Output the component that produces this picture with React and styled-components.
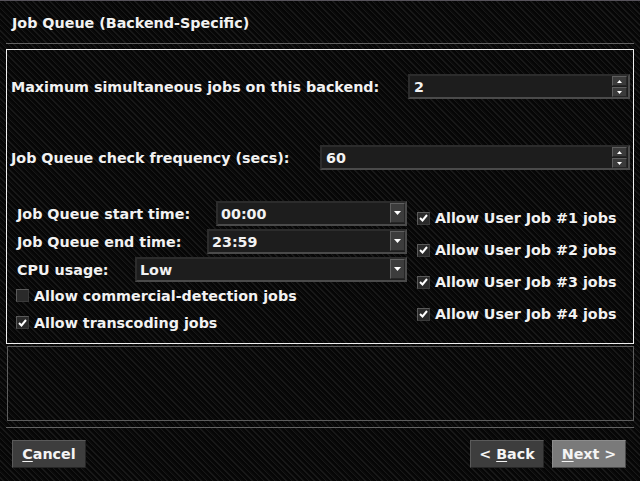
import React from "react";
import styled, { createGlobalStyle } from "styled-components";

const Global = createGlobalStyle`
  html, body { margin: 0; padding: 0; background: #000; }
  * { box-sizing: border-box; }
`;

const carbon = `
  background-color: #0b0b0b;
  background-image: repeating-linear-gradient(45deg, #060606 0px, #060606 2px, #181818 2px, #181818 3px, #0b0b0b 3px, #0b0b0b 4px);
`;

const Screen = styled.div`
  width: 640px;
  height: 481px;
  overflow: hidden;
  display: flex;
  flex-direction: column;
  ${carbon}
  font-family: "DejaVu Sans", "Liberation Sans", sans-serif;
  font-weight: bold;
  font-size: 14.3px;
  color: #f2f2f2;
`;

const TopLine = styled.div`
  height: 1px;
  background: #56525a;
`;

const Header = styled.div`
  height: 42px;
  display: flex;
  align-items: center;
  padding: 2px 0 0 12px;
`;

const Rule = styled.div`
  height: 1px;
  margin: ${(p) => p.$top || 0}px 6px 0 6px;
  background: #626262;
`;

const GroupBox = styled.div`
  margin: 5px 6px 0 6px;
  height: 295px;
  border: 1px solid #f0f0f0;
  display: flex;
  flex-direction: column;
  padding: 0 3px 0 4px;
`;

const FieldRow = styled.div`
  display: flex;
  align-items: center;
  justify-content: space-between;
  height: 25px;
  margin-top: ${(p) => p.$top}px;
`;

const Label = styled.span`
  white-space: nowrap;
  flex: none;
  width: ${(p) => (p.$w ? `${p.$w}px` : "auto")};
`;

const SpinBox = styled.div`
  width: ${(p) => p.$w}px;
  height: 25px;
  display: flex;
  align-items: center;
  background: #1d1d1d;
  border-style: solid;
  border-width: 2px;
  border-color: #2c2c2c #4a4a4a #4a4a4a #2c2c2c;
  padding-left: 4px;
  padding-right: 1px;
`;

const FieldText = styled.span`
  flex: 1;
  white-space: nowrap;
`;

const SpinButtons = styled.div`
  display: flex;
  flex-direction: column;
  gap: 1px;
`;

const SmallButton = styled.div`
  width: 15px;
  height: 10px;
  background: #3b3b3b;
  border: 1px solid;
  border-color: #5e5e5e #262626 #262626 #5e5e5e;
  display: flex;
  align-items: center;
  justify-content: center;
`;

const Columns = styled.div`
  display: flex;
  margin-top: 31px;
  padding-left: 5px;
  gap: 10px;
`;

const LeftCol = styled.div`
  width: 391px;
  display: flex;
  flex-direction: column;
`;

const ComboStack = styled.div`
  display: flex;
  flex-direction: column;
  gap: 3px;
`;

const RightCol = styled.div`
  display: flex;
  flex-direction: column;
  padding-top: 1px;
`;

const ComboRow = styled.div`
  display: flex;
  align-items: center;
  height: 25px;
  padding-left: 1px;
`;

const Combo = styled.div`
  flex: 1;
  height: 25px;
  display: flex;
  align-items: center;
  background: #1d1d1d;
  border-style: solid;
  border-width: 2px;
  border-color: #2c2c2c #4a4a4a #4a4a4a #2c2c2c;
  padding-left: 3px;
`;

const DropButton = styled.div`
  width: 15px;
  height: 20px;
  background: #3c3c3c;
  border: 1px solid;
  border-color: #606060 #262626 #262626 #606060;
  display: flex;
  align-items: center;
  justify-content: center;
  margin-top: -2px;
`;

const CheckRow = styled.div`
  display: flex;
  align-items: center;
  gap: 5px;
  height: ${(p) => p.$h}px;
  white-space: nowrap;
`;

const Box = styled.div`
  width: 13px;
  height: 13px;
  flex: none;
  background: #2a2a2a;
  border: 1px solid;
  border-color: #5a5a5a #3a3a3a #3a3a3a #5a5a5a;
  display: flex;
  align-items: center;
  justify-content: center;
`;

const LowerPanel = styled.div`
  margin: 2px 6px 0 7px;
  height: 75px;
  border: 1px solid #5c5c5c;
`;

const ButtonBar = styled.div`
  display: flex;
  align-items: center;
  margin-top: 12px;
  padding: 0 14px 0 12px;
  gap: 8px;
`;

const Spacer = styled.div`
  flex: 1;
`;

const PushButton = styled.div`
  width: 74px;
  height: 28px;
  display: flex;
  align-items: center;
  justify-content: center;
  background: ${(p) => (p.$focus ? "#7a7a7a" : "#3d3d3d")};
  border: 1px solid;
  border-color: ${(p) =>
    p.$focus ? "#8c8c8c #4a4a4a #4a4a4a #8c8c8c" : "#5a5a5a #262626 #262626 #5a5a5a"};
  color: #f4f4f4;
  white-space: nowrap;
  u { text-decoration-thickness: 1px; text-underline-offset: 2px; }
`;

const Up = () => (
  <svg width="5" height="3" viewBox="0 0 5 3"><path d="M2.5 0 L5 3 L0 3 Z" fill="#fff" /></svg>
);
const Down = () => (
  <svg width="5" height="3" viewBox="0 0 5 3"><path d="M0 0 L5 0 L2.5 3 Z" fill="#fff" /></svg>
);
const DropArrow = () => (
  <svg width="7" height="4" viewBox="0 0 7 4"><path d="M0 0 L7 0 L3.5 4 Z" fill="#fff" /></svg>
);
const Tick = () => (
  <svg width="9" height="8" viewBox="0 0 9 8">
    <path d="M1 4 L3.5 6.5 L8 1" stroke="#fff" strokeWidth="2" fill="none" />
  </svg>
);

const Spin = ({ w, value }) => (
  <SpinBox $w={w}>
    <FieldText>{value}</FieldText>
    <SpinButtons>
      <SmallButton><Up /></SmallButton>
      <SmallButton><Down /></SmallButton>
    </SpinButtons>
  </SpinBox>
);

const ComboField = ({ label, labelW, value }) => (
  <ComboRow>
    <Label $w={labelW}>{label}</Label>
    <Combo>
      <FieldText>{value}</FieldText>
      <DropButton><DropArrow /></DropButton>
    </Combo>
  </ComboRow>
);

const Check = ({ checked, h, children }) => (
  <CheckRow $h={h}>
    <Box>{checked && <Tick />}</Box>
    <span>{children}</span>
  </CheckRow>
);

export default function App() {
  return (
    <Screen>
      <Global />
      <TopLine />
      <Header>Job Queue (Backend-Specific)</Header>
      <Rule />
      <GroupBox>
        <FieldRow $top={24}>
          <Label>Maximum simultaneous jobs on this backend:</Label>
          <Spin w={222} value="2" />
        </FieldRow>
        <FieldRow $top={46}>
          <Label>Job Queue check frequency (secs):</Label>
          <Spin w={310} value="60" />
        </FieldRow>
        <Columns>
          <LeftCol>
            <ComboStack>
              <ComboField label="Job Queue start time:" labelW={199} value="00:00" />
              <ComboField label="Job Queue end time:" labelW={190} value="23:59" />
              <ComboField label="CPU usage:" labelW={118} value="Low" />
            </ComboStack>
            <Check h={27}>Allow commercial-detection jobs</Check>
            <Check h={27} checked>Allow transcoding jobs</Check>
          </LeftCol>
          <RightCol>
            <Check h={32} checked>Allow User Job #1 jobs</Check>
            <Check h={32} checked>Allow User Job #2 jobs</Check>
            <Check h={32} checked>Allow User Job #3 jobs</Check>
            <Check h={32} checked>Allow User Job #4 jobs</Check>
          </RightCol>
        </Columns>
      </GroupBox>
      <LowerPanel />
      <Rule $top={6} />
      <ButtonBar>
        <PushButton><span><u>C</u>ancel</span></PushButton>
        <Spacer />
        <PushButton><span>&lt; <u>B</u>ack</span></PushButton>
        <PushButton $focus><span><u>N</u>ext &gt;</span></PushButton>
      </ButtonBar>
    </Screen>
  );
}
